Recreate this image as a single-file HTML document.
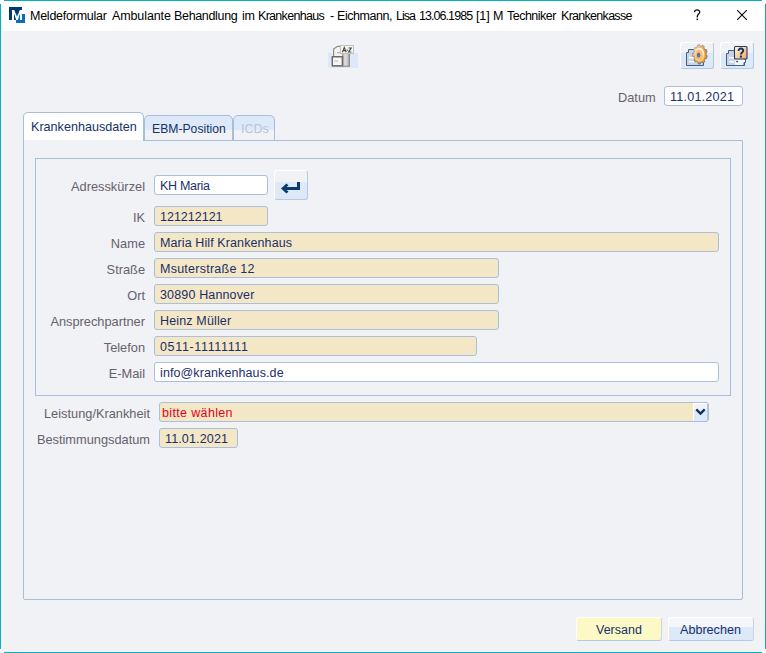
<!DOCTYPE html>
<html><head><meta charset="utf-8">
<style>
html,body{margin:0;padding:0;width:766px;height:653px;overflow:hidden;background:#fff;}
body{position:relative;font-family:"Liberation Sans",sans-serif;}
.a{position:absolute;box-sizing:border-box;}
.t{position:absolute;white-space:nowrap;line-height:14px;}
.win{left:0;top:0;width:766px;height:653px;}
.bt{left:4px;top:0;width:758px;height:1px;background:#00b3bf;}
.bb{left:4px;top:652px;width:758px;height:1px;background:#00b3bf;}
.bl{left:0;top:4px;width:1px;height:645px;background:#00b3bf;}
.br{left:765px;top:4px;width:1px;height:645px;background:#00b3bf;}
.title{left:1px;top:1px;width:764px;height:30px;background:#fff;}
.body{left:1px;top:31px;width:764px;height:621px;background:#f0f2f6;border-left:1px solid #fcf5f7;border-right:1px solid #fcf5f7;border-bottom:1px solid #fcf5f7;}
.lbl{color:#67616d;font-size:12.8px;text-align:right;}
.fld{height:20px;border:1px solid #a9bfdd;border-radius:3px;background:#f3e7c6;}
.fld.w{background:#fff;}
.ft{color:#1a2f6a;font-size:12.5px;}
.tab{border:1px solid #a8bedd;border-bottom:none;border-radius:5px 5px 0 0;}
.btn{border-radius:3px;}
.tw{top:9px;font-size:12.5px;color:#000;}
</style></head><body>
<div class="a bt"></div><div class="a bb"></div><div class="a bl"></div><div class="a br"></div>
<div class="a title"></div>
<div class="a body"></div>

<!-- app icon -->
<svg class="a" style="left:9px;top:7px" width="16" height="16" viewBox="0 0 16 16">
  <rect x="0" y="0" width="13" height="13" fill="#003a75"/>
  <rect x="7" y="7" width="9" height="9" fill="#0a6ebd"/>
  <path d="M3 3h2.2l2.8 7 2.8-7H13v10h-2V6.5L8.8 13H7.2L5 6.5V13H3z" fill="#fff"/>
</svg>
<div class="t tw" style="left:30px;letter-spacing:-0.25px">Meldeformular</div>
<div class="t tw" style="left:112px;letter-spacing:-0.11px">Ambulante</div>
<div class="t tw" style="left:174px;letter-spacing:-0.33px">Behandlung</div>
<div class="t tw" style="left:242px;letter-spacing:-0.3px">im</div>
<div class="t tw" style="left:258px;letter-spacing:-0.7px">Krankenhaus</div>
<div class="t tw" style="left:330px;letter-spacing:0px">-</div>
<div class="t tw" style="left:337px;letter-spacing:-0.44px">Eichmann,</div>
<div class="t tw" style="left:396px;letter-spacing:-1.0px">Lisa</div>
<div class="t tw" style="left:419px;letter-spacing:-0.94px">13.06.1985</div>
<div class="t tw" style="left:476px;letter-spacing:-0.1px">[1]</div>
<div class="t tw" style="left:493px;letter-spacing:0px">M</div>
<div class="t tw" style="left:507px;letter-spacing:-0.52px">Techniker</div>
<div class="t tw" style="left:561px;letter-spacing:-0.71px">Krankenkasse</div>
<svg class="a" style="left:690px;top:6px" width="14" height="18" viewBox="690 6 14 18"><path d="M694.6 12.2 C694.4 9.2 699.8 9.2 699.7 12.1 C699.7 14.2 697.3 14.4 697.3 16.4 V17.4" fill="none" stroke="#111" stroke-width="1.35"/><rect x="696.5" y="18.6" width="1.6" height="1.5" fill="#111"/></svg>
<svg class="a" style="left:737px;top:10px" width="10" height="10" viewBox="0 0 10 10"><path d="M0 0L10 10M10 0L0 10" stroke="#000" stroke-width="1.05"/></svg>

<!-- toolbar icon center -->
<div class="a" style="left:328px;top:53px;width:30px;height:15px;background:#dde9f9;"></div>
<svg class="a" style="left:326px;top:42px" width="34" height="28" viewBox="326 42 34 28">
  <defs><linearGradient id="cab" x1="0" x2="1"><stop offset="0" stop-color="#9a9a9a"/><stop offset="0.35" stop-color="#e4e4e4"/><stop offset="0.7" stop-color="#c4c4c4"/><stop offset="1" stop-color="#7c7c7c"/></linearGradient></defs>
  <path d="M333.6 49 L337.5 46.3 H343 V57 H333.6 Z" fill="#f2f2f2" stroke="#8c8c8c" stroke-width="1.2"/>
  <rect x="337" y="52" width="3" height="1.3" fill="#b5b5b5"/>
  <rect x="342.5" y="53" width="7.5" height="13.5" fill="url(#cab)"/>
  <path d="M332.3 56.8 H342.4 V65.8 H332.3 Z" fill="#f6f6f6" stroke="#6a6a6a" stroke-width="1.5"/>
  <rect x="334.5" y="60.5" width="3.5" height="1.2" fill="#bdbdbd"/>
  <rect x="332" y="65.6" width="18" height="1.4" fill="#8e8e8e" opacity="0.8"/>
  <rect x="340.5" y="45.5" width="13" height="8" fill="#f3f3ef" stroke="#c2c2ba" stroke-width="1"/>
  <path d="M342.4 52.2 L344.3 47.6 L346.2 52.2 M343.2 50.6 H345.4 M346.7 50.2 H348.2 M348.6 48 H351.2 L348.6 52 H351.4" fill="none" stroke="#4a4a4a" stroke-width="1.15"/>
</svg>

<!-- right toolbar buttons -->
<div class="a btn" style="left:680px;top:42px;width:34px;height:27px;border:1px solid #fff;border-right-color:#b5c8e4;border-bottom-color:#b5c8e4;background:linear-gradient(#f0f2f6 0,#f0f2f6 10px,#dde9f9 10px);"></div>
<div class="a btn" style="left:720px;top:42px;width:34px;height:27px;border:1px solid #fff;border-right-color:#b5c8e4;border-bottom-color:#b5c8e4;background:linear-gradient(#f0f2f6 0,#f0f2f6 10px,#dde9f9 10px);"></div>
<svg class="a" style="left:680px;top:42px" width="80" height="28" viewBox="680 42 80 28">
  <defs>
    <radialGradient id="gear" cx="0.45" cy="0.45" r="0.6"><stop offset="0" stop-color="#fff6e0"/><stop offset="0.55" stop-color="#ffb060"/><stop offset="1" stop-color="#f58a10"/></radialGradient>
    <linearGradient id="ghl" x1="0" y1="0" x2="1" y2="1"><stop offset="0" stop-color="#fff" stop-opacity="0.85"/><stop offset="0.45" stop-color="#fff" stop-opacity="0.2"/><stop offset="0.6" stop-color="#fff" stop-opacity="0"/></linearGradient>
    <linearGradient id="qbox" x1="0" y1="0" x2="1" y2="1"><stop offset="0" stop-color="#fffbea"/><stop offset="1" stop-color="#f6a65a"/></linearGradient>
  </defs>
  <!-- doc 1 -->
  <path d="M686.5 52.5 H688.5 V49.5 H695 V52.5 H703.5 V65.5 H686.5 Z" fill="#c9d5e2" stroke="#3f6188" stroke-width="1"/>
  <rect x="689" y="57" width="5" height="1.4" fill="#fff"/>
  <rect x="689" y="61" width="5" height="1.4" fill="#fff"/>
  <path d="M706.17 55.22 L707.23 55.71 L706.58 58.61 L705.49 58.24 L704.33 60.30 L704.91 61.58 L703.00 63.25 L702.35 62.03 L700.46 62.62 L700.29 64.10 L698.02 63.75 L698.11 62.25 L696.38 61.09 L695.53 62.08 L693.97 59.87 L694.76 58.80 L693.99 56.43 L692.87 56.46 L692.74 53.43 L693.86 53.29 L694.41 50.82 L693.54 49.88 L694.90 47.45 L695.83 48.30 L697.45 46.88 L697.23 45.42 L699.46 44.72 L699.75 46.16 L701.68 46.46 L702.22 45.15 L704.26 46.52 L703.79 47.88 L705.12 49.76 L706.17 49.22 L707.07 52.01 L706.06 52.65Z" fill="#f7931f" stroke="#3a5a80" stroke-width="0.6"/>
  <path d="M706.17 55.22 L707.23 55.71 L706.58 58.61 L705.49 58.24 L704.33 60.30 L704.91 61.58 L703.00 63.25 L702.35 62.03 L700.46 62.62 L700.29 64.10 L698.02 63.75 L698.11 62.25 L696.38 61.09 L695.53 62.08 L693.97 59.87 L694.76 58.80 L693.99 56.43 L692.87 56.46 L692.74 53.43 L693.86 53.29 L694.41 50.82 L693.54 49.88 L694.90 47.45 L695.83 48.30 L697.45 46.88 L697.23 45.42 L699.46 44.72 L699.75 46.16 L701.68 46.46 L702.22 45.15 L704.26 46.52 L703.79 47.88 L705.12 49.76 L706.17 49.22 L707.07 52.01 L706.06 52.65Z" fill="url(#ghl)"/>
  <ellipse cx="699.6" cy="54.3" rx="4.9" ry="6.5" fill="#fff0d6"/>
  <path d="M694.8 57 A4.9 6.5 0 0 0 704.4 56 L702 55 Z" fill="#ffc888"/>
  <ellipse cx="699" cy="54.9" rx="3.9" ry="5.4" fill="#ffbb72"/>
  <ellipse cx="698.6" cy="55.1" rx="1.8" ry="2.7" fill="#4f79a6"/>
  <!-- doc 2 -->
  <path d="M726.5 53.5 H728.5 V50.5 H735 V53.5 H744.5 V65.5 H726.5 Z" fill="#c9d5e2" stroke="#3f6188" stroke-width="1"/>
  <rect x="729" y="57" width="5" height="1.4" fill="#fff"/>
  <rect x="729" y="61" width="5" height="1.4" fill="#fff"/>
  <path d="M735 59.5 H745.5 V62.5 H744 V65.5 H735 Z" fill="#f4f6f8"/><path d="M745.5 59 V62.5 H744 V65.5 H727" fill="none" stroke="#3f6188" stroke-width="1"/><rect x="736.3" y="60.8" width="1.6" height="1.4" fill="#1d3d68"/>
  <rect x="734.5" y="46.5" width="12.5" height="12.5" rx="1" fill="url(#qbox)" stroke="#1d3d68" stroke-width="1.1"/>
  <path d="M738.6 50.9 C738.4 47.8 743.2 47.7 743.2 50.5 C743.2 52.5 740.9 52.7 740.9 54.5" fill="none" stroke="#13345e" stroke-width="2"/><rect x="739.9" y="55.6" width="2" height="2" fill="#13345e"/>
</svg>

<!-- Datum -->
<div class="t lbl" style="left:618px;top:91px;">Datum</div>
<div class="a fld w" style="left:664px;top:86px;width:79px;height:20px;"></div>
<div class="t ft" style="left:670px;top:90px;font-size:12.6px;letter-spacing:0.2px;">11.01.2021</div>

<!-- tabs -->
<div class="a" style="left:23px;top:140px;width:720px;height:460px;border:1px solid #a8bedd;border-radius:0 0 2px 2px;"></div>
<div class="a tab" style="left:144px;top:115px;width:89px;height:26px;background:linear-gradient(#dde9f9 0,#dde9f9 14px,#f0f2f6 14px);border-bottom:1px solid #a8bedd;"></div>
<div class="a tab" style="left:233px;top:115px;width:42px;height:26px;background:linear-gradient(#dde9f9 0,#dde9f9 14px,#f0f2f6 14px);border-bottom:1px solid #a8bedd;"></div>
<div class="a tab" style="left:23px;top:112px;width:121px;height:29px;background:#fff;"></div>
<div class="a" style="left:24px;top:140px;width:119px;height:1px;background:#f0f2f6;"></div>
<div class="t" style="left:31px;top:120px;font-size:12.6px;color:#15316a;">Krankenhausdaten</div>
<div class="t" style="left:152px;top:122px;font-size:12.2px;color:#15316a;">EBM-Position</div>
<div class="t" style="left:241px;top:122px;font-size:12.5px;color:#b4c6de;">ICDs</div>

<!-- groupbox -->
<div class="a" style="left:35px;top:158px;width:696px;height:238px;border:1px solid #a8bedd;"></div>

<div class="t lbl" style="left:0;width:145px;top:180px;">Adresskürzel</div>
<div class="a fld w" style="left:154px;top:175px;width:114px;"></div>
<div class="t ft" style="left:160px;top:179px;letter-spacing:-0.3px;">KH Maria</div>
<div class="a btn" style="left:274px;top:170px;width:34px;height:30px;border:1px solid #fff;border-right-color:#b5c8e4;border-bottom-color:#b5c8e4;background:linear-gradient(#f0f2f6 0,#f0f2f6 11px,#dde9f9 11px);"></div>
<svg class="a" style="left:280px;top:181px" width="22" height="14" viewBox="0 0 22 14">
  <path d="M1 7.5L6.5 2.5 8.5 4.5 6.5 6H17V1h3v8H6.5L8.5 10.5 6.5 12.5z" fill="#0b3a6e"/>
</svg>

<div class="t lbl" style="left:0;width:145px;top:211px;">IK</div>
<div class="a fld" style="left:154px;top:206px;width:114px;"></div>
<div class="t ft" style="left:160px;top:210px;">121212121</div>

<div class="t lbl" style="left:0;width:145px;top:237px;">Name</div>
<div class="a fld" style="left:154px;top:232px;width:565px;"></div>
<div class="t ft" style="left:160px;top:236px;letter-spacing:0.1px;">Maria Hilf Krankenhaus</div>

<div class="t lbl" style="left:0;width:145px;top:263px;">Straße</div>
<div class="a fld" style="left:154px;top:258px;width:345px;"></div>
<div class="t ft" style="left:160px;top:262px;letter-spacing:0.25px;">Msuterstraße 12</div>

<div class="t lbl" style="left:0;width:145px;top:289px;">Ort</div>
<div class="a fld" style="left:154px;top:284px;width:345px;"></div>
<div class="t ft" style="left:160px;top:288px;letter-spacing:0.15px;">30890 Hannover</div>

<div class="t lbl" style="left:0;width:145px;top:315px;">Ansprechpartner</div>
<div class="a fld" style="left:154px;top:310px;width:345px;"></div>
<div class="t ft" style="left:160px;top:314px;letter-spacing:0.15px;">Heinz Müller</div>

<div class="t lbl" style="left:0;width:145px;top:341px;">Telefon</div>
<div class="a fld" style="left:154px;top:336px;width:323px;"></div>
<div class="t ft" style="left:160px;top:340px;letter-spacing:0.65px;">0511-11111111</div>

<div class="t lbl" style="left:0;width:145px;top:367px;">E-Mail</div>
<div class="a fld w" style="left:154px;top:362px;width:565px;"></div>
<div class="t ft" style="left:160px;top:366px;letter-spacing:0.1px;">info@krankenhaus.de</div>

<!-- Leistung -->
<div class="t lbl" style="left:0;width:150px;top:407px;">Leistung/Krankheit</div>
<div class="a fld" style="left:159px;top:402px;width:550px;"></div>
<div class="a" style="left:693px;top:403px;width:15px;height:18px;border-left:1px solid #fff;border-top:1px solid #fff;border-right:1px solid #b3c6e2;border-radius:0 2px 2px 0;background:linear-gradient(#f0f2f6 0,#f0f2f6 6px,#dde9f9 6px);"></div>
<svg class="a" style="left:694px;top:406px" width="12" height="10" viewBox="694 406 12 10"><path d="M696.3 409.4 L700.5 413.6 L704.7 409.4" stroke="#0b2f5e" stroke-width="2.2" fill="none" stroke-linecap="butt"/></svg>
<div class="t" style="left:162px;top:406px;font-size:12.5px;color:#e6001c;letter-spacing:0.35px;">bitte wählen</div>

<div class="t lbl" style="left:0;width:150px;top:433px;">Bestimmungsdatum</div>
<div class="a fld" style="left:159px;top:428px;width:79px;"></div>
<div class="t ft" style="left:165px;top:432px;font-size:12.6px;letter-spacing:0.1px;">11.01.2021</div>

<!-- bottom buttons -->
<div class="a btn" style="left:576px;top:617px;width:86px;height:24px;border:1px solid #fff;border-right-color:#c8d4e8;border-bottom-color:#b5c8e4;background:#fcf9c6;"></div>
<div class="t" style="left:596px;top:623px;font-size:12.5px;color:#15316a;">Versand</div>
<div class="a btn" style="left:668px;top:617px;width:86px;height:24px;border:1px solid #fff;border-right-color:#c8d4e8;border-bottom-color:#b5c8e4;background:linear-gradient(#f4f6fa 0,#f4f6fa 9px,#dde9f9 9px);"></div>
<div class="t" style="left:680px;top:623px;font-size:12.6px;color:#15316a;">Abbrechen</div>

</body></html>
